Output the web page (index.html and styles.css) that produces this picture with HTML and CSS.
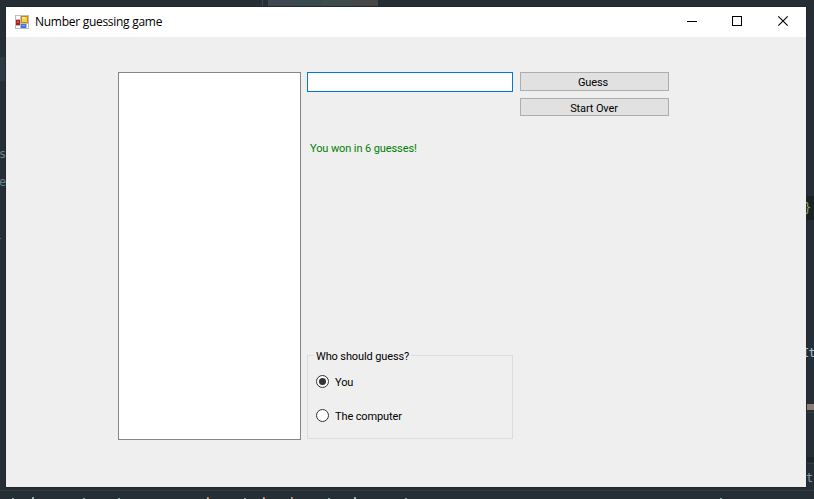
FILE: index.html
```html
<!DOCTYPE html>
<html lang="en">
<head>
<meta charset="utf-8">
<title>Number guessing game</title>
<link rel="stylesheet" href="styles.css">
</head>
<body>
<svg class="desktop" width="814" height="499" viewBox="0 0 814 499" shape-rendering="crispEdges" aria-hidden="true">
  <rect width="814" height="499" fill="#242e34"/>
  <rect y="57" width="6" height="24" fill="#2c3a43"/>
  <path d="M262.500 0V6" stroke="#3b484d"/>
  <rect x="268" width="26" height="6" fill="#3e4651"/>
  <rect x="294" width="28" height="6" fill="#394a4e"/>
  <rect x="322" width="28" height="6" fill="#404b4b"/>
  <rect x="350" width="28" height="6" fill="#464749"/>
  <rect x="806" y="196" width="8" height="24" fill="#1a2227"/>
  <rect x="806" y="404" width="8" height="6" fill="#8b7c75"/>
  <rect x="806" y="457" width="8" height="5" fill="#1b2429"/>
  <path d="M806 412.500h8M806 463.500h8M0 490.500h814" stroke="#2e3c43"/>
  <rect x="5" y="6" width="802" height="482" fill="#20282d"/>
  <path d="M0 238.500h1" stroke="#74613f"/>
  <path d="M12.500 498v1M32.500 497v2M83.500 498v1M118.500 498v1M207.500 497v2M244.500 498v1M263.500 497v2M291.500 497v2M328.500 498v1M354.500 497v2M405.500 498v1M720.500 498v1" stroke="#91a5ab" stroke-width="2"/>
  <path d="M208.500 497v2M264.500 497v2M292.500 497v2" stroke="#b27551"/>
</svg>
<div class="code code-s">s</div>
<div class="code code-e">e</div>
<div class="code code-brace">}</div>
<div class="code code-it">It</div>
<div class="code code-t">t</div>
<main class="window">
  <header class="titlebar">
    <svg class="appicon" width="14" height="14" viewBox="0 0 14 14" shape-rendering="crispEdges">
      <path fill="#bdbdbd" d="M0 0h14v14H0z"/>
      <path fill="#fff" d="M1 1h4v3H1zM1 11h4v2H1zM12 9h1v4h-1z"/>
      <path fill="#a91d18" d="M1 5h4v5H1z"/><path fill="#d64c3d" d="M2 6h2v2H2z"/>
      <path fill="#c58b12" d="M6 1h7v7H6z"/><path fill="#f9cf45" d="M7 2h5v5H7z"/><path fill="#ffe99a" d="M7 2h3v2H7z"/>
      <path fill="#3e74d8" d="M6 9h5v4H6z"/><path fill="#78a5f2" d="M7 10h3v1H7z"/>
    </svg>
    <h1>Number guessing game</h1>
    <div class="controls">
      <svg width="45" height="30"><path d="M17 14.500h10" stroke="#000" shape-rendering="crispEdges"/></svg>
      <svg width="45" height="30"><path d="M17.500 9.500h9v9h-9z" fill="none" stroke="#000" shape-rendering="crispEdges"/></svg>
      <svg width="45" height="30"><path d="M18.300 9.300l9.400 9.400M27.700 9.300l-9.400 9.400" stroke="#000" stroke-width="1.100"/></svg>
    </div>
  </header>
  <section class="form">
    <div class="history"></div>
    <div class="play">
      <input type="text" aria-label="Guess">
      <p class="result">You won in 6 guesses!</p>
      <div class="group">
        <h2>Who should guess?</h2>
        <label><svg width="13" height="13"><circle cx="6.500" cy="6.500" r="6" fill="#fff" stroke="#333"/><circle cx="6.500" cy="6.500" r="3.500" fill="#333"/></svg><span>You</span></label>
        <label><svg width="13" height="13"><circle cx="6.500" cy="6.500" r="6" fill="#fff" stroke="#333"/></svg><span>The computer</span></label>
      </div>
    </div>
    <div class="actions">
      <button class="guess">Guess</button>
      <button class="restart">Start Over</button>
    </div>
  </section>
</main>
</body>
</html>
```
FILE: styles.css
```css
* { box-sizing: border-box; }
body {
  margin: 0;
  width: 814px;
  height: 499px;
  padding: 7px 8px 12px 6px;
  overflow: hidden;
  background: #242e34;
  font: 400 11px/14px Roboto, sans-serif;
  letter-spacing: -0.12px;
  color: #000;
}
h1, h2, p { margin: 0; font-size: inherit; font-weight: inherit; }
.desktop { position: absolute; left: 0; top: 0; }
.code { position: absolute; font: 12px/14px "DejaVu Sans Mono", monospace; letter-spacing: 0; color: #9fc3dc; }
.code-s { left: -1px; top: 147px; color: #6b8590; }
.code-e { left: -1px; top: 175px; color: #5f8290; }
.code-brace { left: 804px; top: 201px; color: #93a451; }
.code-it { left: 802px; top: 346px; letter-spacing: -0.7px; }
.code-t { left: 806px; top: 471px; color: #8098aa; }
.window { position: relative; width: 800px; height: 480px; background: #efefef; }
.titlebar { display: flex; align-items: center; height: 30px; padding-left: 9px; background: #fff; }
.titlebar h1 { margin-left: 6px; font: 12px/16px "Open Sans", sans-serif; letter-spacing: -0.28px; white-space: nowrap; }
.controls { display: flex; margin-left: auto; margin-right: 1px; }
.controls svg { display: block; }
.form { display: grid; grid-template-columns: 183px 206px 149px; column-gap: 6px; height: 450px; padding: 35px 0 47px 112px; }
.history { background: #fff; border: 1px solid #828790; }
.play { display: flex; flex-direction: column; }
input { display: block; width: 206px; height: 20px; padding: 0; border: 1px solid #0078d7; border-radius: 0; outline: 0; background: #fff; }
.result { margin: 50px 0 0 3px; color: #008000; letter-spacing: -0.1px; }
.group { height: 84px; margin-top: auto; margin-bottom: 1px; padding-left: 8px; border: 1px solid #dcdcdc; }
.group h2 { width: max-content; height: 14px; margin: -6px 0 0 -2px; padding: 0 2px; background: #efefef; }
.group label { display: flex; align-items: flex-start; gap: 6px; height: 14px; }
.group label span { padding-top: 1px; }
.group h2 + label { margin-top: 11px; }
.group label + label { margin-top: 20px; }
.actions { display: flex; flex-direction: column; gap: 7px; margin-left: 1px; width: 149px; }
button { width: 149px; padding: 3px 1px 0 0; border: 1px solid #adadad; border-radius: 0; background: #e1e1e1; color: #000; font: inherit; letter-spacing: inherit; line-height: 13px; }
.guess { height: 19px; padding: 1px 3px 0 0; }
.restart { height: 18px; }
```
